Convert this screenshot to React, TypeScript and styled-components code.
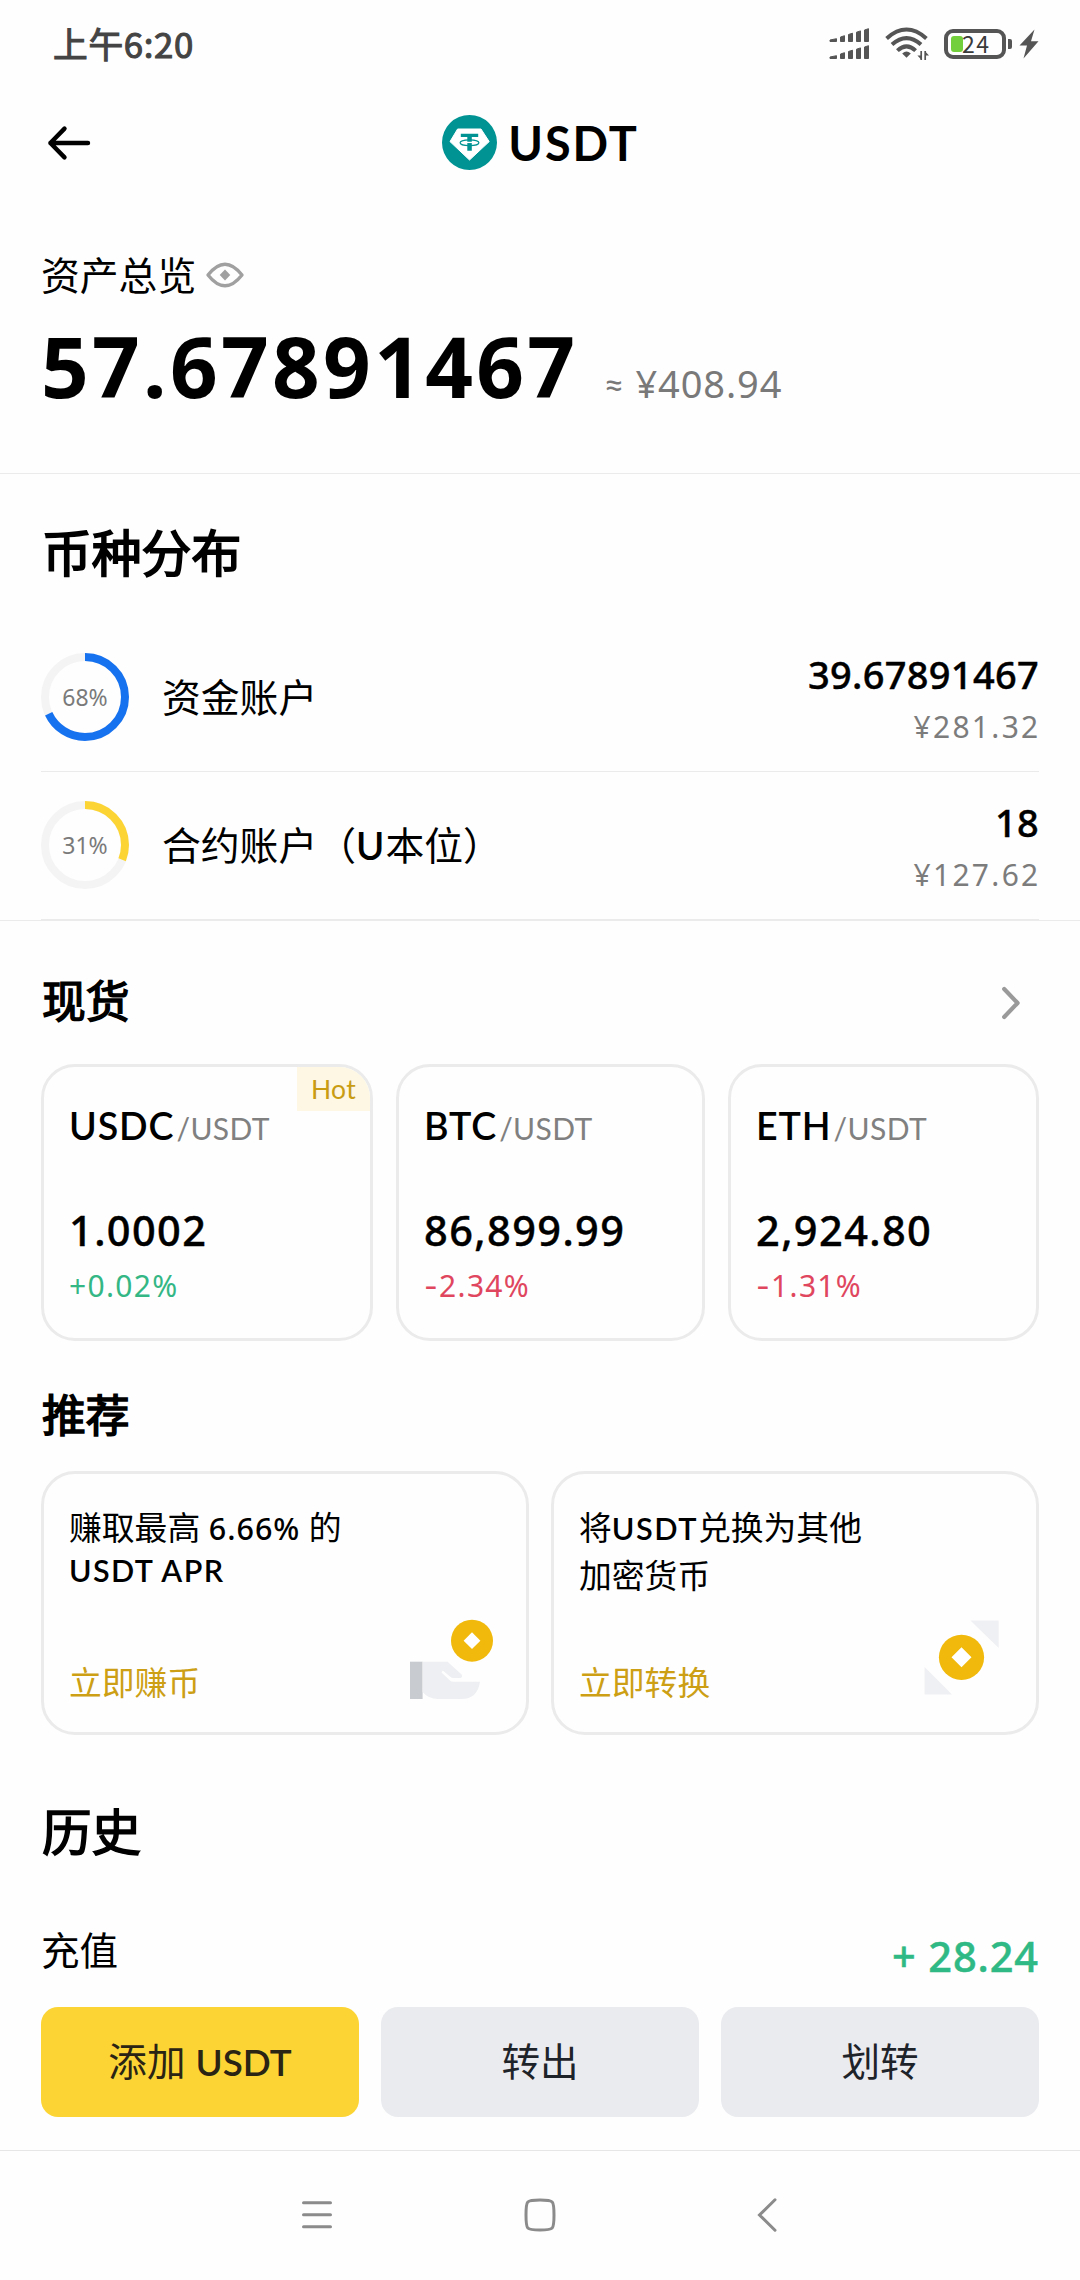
import React from "react";
import styled, { createGlobalStyle } from "styled-components";

const SANS = '"Noto Sans", "Noto Sans CJK SC", sans-serif';
const CJK = '"Noto Sans CJK SC", "Noto Sans", sans-serif';
const LETTERS = 'Lato, "Noto Sans", "Noto Sans CJK SC", sans-serif';
const LINE = "#ebebeb";

const GlobalStyle = createGlobalStyle`
  * { box-sizing: border-box; }
  body { margin: 0; background: #fefefe; color: #000; font-family: ${SANS}; }
`;

const Screen = styled.div`
  width: 1080px;
  height: 2280px;
  overflow: hidden;
  display: flex;
  flex-direction: column;
  background: #fefefe;
`;

const StatusBar = styled.div`
  height: 85px;
  flex: none;
  padding: 0 41px 0 53px;
  display: flex;
  align-items: center;
  justify-content: space-between;
`;

const Clock = styled.span`
  font: 400 34.7px/86px ${CJK};
  -webkit-text-stroke: 1.1px #444;
  letter-spacing: 0.7px;
  color: #444;
`;

const StatusIcons = styled.div`
  display: flex;
  align-items: center;
  height: 34px;
  padding-top: 3px;
`;

const SignalIcon = styled.svg`
  width: 41px;
  height: 32px;
  margin-right: 15px;
`;

const WifiIcon = styled.svg`
  width: 44px;
  height: 34px;
  margin-right: 15px;
`;

const Battery = styled.div`
  position: relative;
  width: 62px;
  height: 30px;
  border: 4px solid #555;
  border-radius: 9px;
  margin-right: 13px;
  padding-left: 14px;
  font: 400 23px/20px ${CJK};
  letter-spacing: 1.4px;
  color: #3a3a3a;

  &::before {
    content: "";
    position: absolute;
    z-index: -1;
    left: 3px;
    top: 3px;
    width: 12px;
    height: 16px;
    border-radius: 3px;
    background: #74cf3c;
  }
  &::after {
    content: "";
    position: absolute;
    right: -10px;
    top: 6px;
    width: 4px;
    height: 10px;
    border-radius: 0 2px 2px 0;
    background: #555;
  }
`;

const BatteryWrap = styled.div`
  position: relative;
  z-index: 0;
`;

const BoltIcon = styled.svg`
  width: 20px;
  height: 30px;
`;

const Header = styled.header`
  height: 115px;
  flex: none;
  padding: 0 41px 0 46px;
  display: grid;
  grid-template-columns: 1fr auto 1fr;
  align-items: center;
`;

const BackIcon = styled.svg`
  width: 46px;
  height: 36px;
`;

const CoinTitle = styled.h1`
  margin: 0 4px 0 0;
  display: flex;
  align-items: center;
  gap: 11px;
  font: 700 46.8px/60px ${LETTERS};
  letter-spacing: 1.9px;
`;

const Summary = styled.section`
  height: 274px;
  flex: none;
  padding: 48px 41px 0;
  border-bottom: 1px solid ${LINE};
`;

const SummaryLabel = styled.div`
  display: flex;
  align-items: center;
  gap: 8px;
  height: 54px;
  font-size: 38.8px;
  line-height: 53px;
`;

const Balance = styled.div`
  margin-top: 13px;
  display: flex;
  align-items: baseline;
  line-height: 101px;
`;

const BalanceValue = styled.span`
  font-size: 83.5px;
  font-weight: 700;
  letter-spacing: 3.3px;
`;

const BalanceFiat = styled.span`
  font-size: 38px;
  letter-spacing: 0.9px;
  color: #797979;
`;

const Approx = styled.span`
  width: 32px;
  margin-left: 25px;
  font-family: ${LETTERS};
  font-size: 36px;
  color: #797979;
`;

const Section = styled.section<{ $top: number; $ruled?: boolean }>`
  flex: none;
  padding: ${(p) => p.$top}px 41px 0;
  border-bottom: ${(p) => (p.$ruled ? `1px solid ${LINE}` : "none")};
`;

const Heading = styled.h2<{ $size: number; $after: number; $stroke: number }>`
  margin: 0 0 ${(p) => p.$after}px;
  padding-left: 1px;
  height: 56px;
  display: flex;
  align-items: center;
  justify-content: space-between;
  font-size: ${(p) => p.$size}px;
  font-weight: 400;
  line-height: 56px;
  -webkit-text-stroke: ${(p) => p.$stroke}px #000;
`;

const MoreIcon = styled.svg`
  width: 22px;
  height: 36px;
  margin: 2px 17px 0 0;
`;

const AccountRow = styled.div`
  height: 148px;
  padding-bottom: 1px;
  border-bottom: 1px solid ${LINE};
  display: flex;
  align-items: center;
`;

const Ring = styled.div`
  width: 88px;
  height: 88px;
  display: grid;
  place-items: center;
  margin-right: 33px;

  > * { grid-area: 1 / 1; }
`;

const RingLabel = styled.span`
  font-size: 23px;
  line-height: 30px;
  color: #7a7a7a;
`;

const AccountName = styled.span`
  flex: 1;
  font-size: 38.8px;
  line-height: 54px;
`;

const Latin = styled.span<{ $size: number; $spacing?: number }>`
  font-family: ${LETTERS};
  font-size: ${(p) => p.$size}px;
  font-weight: 600;
  line-height: 1;
  letter-spacing: ${(p) => p.$spacing ?? 0}px;
`;

const Rate = styled(Latin)`
  font-family: ${SANS};
  font-weight: 500;
`;

const Amounts = styled.div`
  padding-top: 6px;
  text-align: right;
  line-height: 52px;
`;

const Amount = styled.div`
  font-size: 38px;
  font-weight: 500;
  letter-spacing: 0.3px;
  -webkit-text-stroke: 0.4px #000;
`;

const Fiat = styled.div`
  font-size: 30px;
  line-height: 54px;
  letter-spacing: 2.3px;
  margin: 0 -1.6px -2px 0;
  color: #7c7c7c;
`;

const PairGrid = styled.div`
  display: grid;
  grid-template-columns: 332px 309px 311px;
  gap: 23px;
`;

const Card = styled.article`
  position: relative;
  overflow: hidden;
  border: 3px solid ${LINE};
  border-radius: 34px;
`;

const PairCard = styled(Card)`
  height: 277px;
  padding: 34px 24px 0 25px;
`;

const PairName = styled.div`
  height: 50px;
  line-height: 50px;
  font-family: ${LETTERS};
  font-size: 37.6px;
  font-weight: 600;
  letter-spacing: 0.9px;
`;

const Quote = styled.span`
  font-size: 30px;
  font-weight: 400;
  line-height: 1;
  letter-spacing: 0.4px;
  margin-left: 2px;
  color: #808080;
`;

const Price = styled.div`
  margin-top: 53px;
  font-size: 41.5px;
  font-weight: 500;
  line-height: 52px;
  letter-spacing: 1.4px;
  -webkit-text-stroke: 0.4px #000;
`;

const Change = styled.div<{ $up: boolean }>`
  margin-top: 7px;
  font-size: 30px;
  line-height: 45px;
  letter-spacing: 1.3px;
  color: ${(p) => (p.$up ? "#34b785" : "#e0475f")};
`;

const Sign = styled.span<{ $wide: boolean }>`
  font-family: ${(p) => (p.$wide ? "Inter, sans-serif" : SANS)};
  line-height: 1;
`;

const HotTag = styled.span`
  position: absolute;
  top: 0;
  right: 0;
  width: 73px;
  height: 44px;
  padding-left: 14px;
  background: #fdf7e3;
  color: #c99c12;
  font-family: ${LETTERS};
  font-size: 26.5px;
  letter-spacing: 0.3px;
  line-height: 44px;
`;

const PromoGrid = styled.div`
  display: grid;
  grid-template-columns: 1fr 1fr;
  gap: 22px;
`;

const PromoCard = styled(Card)`
  height: 264px;
  padding: 30px 30px 25px 25px;
  display: flex;
  flex-direction: column;
  justify-content: space-between;
`;

const PromoLine = styled.div<{ $height?: number }>`
  font-size: 32.8px;
  line-height: ${(p) => p.$height ?? 48}px;
`;

const PromoFoot = styled.div`
  display: flex;
  align-items: flex-end;
  justify-content: space-between;
  font-size: 32.8px;
  line-height: 48px;
  color: #cc9f14;
`;

const PromoIcon = styled.svg`
  width: 88px;
  height: 88px;
  margin-bottom: 2px;
`;

const HistoryRow = styled.div`
  height: 54px;
  display: flex;
  justify-content: space-between;
  font-size: 38.6px;
  line-height: 54px;
`;

const Credit = styled.span`
  padding-top: 6px;
  font-size: 41.5px;
  font-weight: 500;
  letter-spacing: 0.9px;
  -webkit-text-stroke: 0.5px #2fb984;
  color: #2fb984;
`;

const Actions = styled.div`
  flex: none;
  margin-top: 30px;
  padding: 0 41px 33px;
  display: grid;
  grid-template-columns: repeat(3, 1fr);
  gap: 22px;
  border-bottom: 1px solid #e6e6e6;
`;

const ActionButton = styled.button<{ $primary?: boolean }>`
  height: 110px;
  border: 0;
  border-radius: 17px;
  padding: 0 0 2px;
  background: ${(p) => (p.$primary ? "#fcd535" : "#eaebef")};
  color: ${(p) => (p.$primary ? "#2a2414" : "#1e2329")};
  font: 400 38.6px/54px ${SANS};
`;

const NavBar = styled.nav`
  flex: 1;
  display: flex;
  align-items: center;
  gap: 191px;
  padding: 0 0 1px 301px;
`;

const NavIcon = styled.svg<{ $shift?: number }>`
  width: 32px;
  height: 34px;
  margin-left: ${(p) => p.$shift ?? 0}px;
  fill: none;
  stroke: #8b8b8b;
  stroke-width: 3;
  stroke-linecap: round;
`;

const SIGNAL_BARS = [
  { x: 0.5, w: 7.5, top: 10.5 },
  { x: 11, w: 5, top: 7.5 },
  { x: 19, w: 5, top: 5 },
  { x: 27, w: 5, top: 2.7 },
  { x: 35, w: 5, top: 0.5 },
];

function Signal() {
  return (
    <SignalIcon viewBox="0 0 41 32" fill="#555" stroke="#555" strokeWidth="1" strokeLinejoin="round">
      {[0, 17].map((dy) =>
        SIGNAL_BARS.map((b) => (
          <path
            key={`${dy}-${b.x}`}
            d={`M${b.x + 0.5} ${dy + b.top + 1.5}L${b.x + b.w - 0.5} ${dy + b.top + 0.2}V${dy + 13.5}H${b.x + 0.5}Z`}
          />
        )),
      )}
    </SignalIcon>
  );
}

function Wifi() {
  return (
    <WifiIcon viewBox="0 0 44 34" fill="none" stroke="#555" strokeWidth="4">
      <path d="M1.6 11.4Q21.5 -6.4 41.4 11.4" />
      <path d="M7 17.6Q21.5 4.6 36 17.6" />
      <path d="M12.4 23.6Q21.5 15 30.6 23.6" />
      <path d="M17.2 26.4Q21.5 22.8 25.8 26.4L21.5 30.8Z" fill="#555" stroke="none" />
      <path d="M36.2 24V33M40.2 24V33" strokeWidth="1.7" />
      <path d="M36.5 32.8L32.4 28.5H36.5ZM40 24.2L44 28.4H40Z" fill="#555" stroke="none" />
    </WifiIcon>
  );
}

function TetherLogo() {
  return (
    <svg width="55" height="55" viewBox="0 0 55 55">
      <circle cx="27.5" cy="27.5" r="27.5" fill="#009393" />
      <path d="M15.6 14H39L47.2 26.6L27.5 45L8 26.6Z" fill="#fff" stroke="#fff" strokeLinejoin="round" />
      <path d="M18.8 18.7H36.2V22H29.8V35.7H25.3V22H18.8Z" fill="#009393" />
      <ellipse cx="27.5" cy="27.8" rx="9.4" ry="2.9" fill="none" stroke="#009393" strokeWidth="1.2" />
      <path d="M22 27.4H33" stroke="#fff" strokeWidth="1.3" />
    </svg>
  );
}

function PercentRing({ percent, color }: { percent: number; color: string }) {
  const r = 40;
  const length = 2 * Math.PI * r;
  return (
    <Ring>
      <svg width="88" height="88" viewBox="0 0 88 88" fill="none" strokeWidth="8">
        <circle cx="44" cy="44" r={r} stroke="#f4f4f4" />
        <circle
          cx="44"
          cy="44"
          r={r}
          stroke={color}
          strokeDasharray={`${(length * percent) / 100} ${length}`}
          transform="rotate(-90 44 44)"
        />
      </svg>
      <RingLabel>{percent}%</RingLabel>
    </Ring>
  );
}

const PAIRS = [
  { base: "USDC", price: "1.0002", sign: "+", change: "0.02%", hot: true },
  { base: "BTC", price: "86,899.99", sign: "-", change: "2.34%", hot: false },
  { base: "ETH", price: "2,924.80", sign: "-", change: "1.31%", hot: false },
];

export default function App() {
  return (
    <Screen>
      <GlobalStyle />
      <StatusBar>
        <Clock>上午6:20</Clock>
        <StatusIcons>
          <Signal />
          <Wifi />
          <BatteryWrap>
            <Battery>24</Battery>
          </BatteryWrap>
          <BoltIcon viewBox="0 0 20 30" fill="#555">
            <path d="M15.5 0.5L0.5 16.5H8L4.5 29.5L19.5 12.3H12Z" />
          </BoltIcon>
        </StatusIcons>
      </StatusBar>

      <Header>
        <BackIcon viewBox="0 0 46 36" fill="none" stroke="#000" strokeWidth="4.4" strokeLinecap="round" strokeLinejoin="round">
          <path d="M18.5 3.6L4.4 18L18.5 32.4M4.4 18H42" />
        </BackIcon>
        <CoinTitle>
          <TetherLogo />
          USDT
        </CoinTitle>
      </Header>

      <Summary>
        <SummaryLabel>
          资产总览
          <svg width="42" height="28" viewBox="0 0 42 28">
            <path
              d="M4 14Q12.500 3.200 21 3.200Q29.500 3.200 38 14Q29.500 24.800 21 24.800Q12.500 24.800 4 14Z"
              fill="none"
              stroke="#a0a0a0"
              strokeWidth="3.4"
              strokeLinejoin="round"
            />
            <path d="M21 8.600L26.300 14L21 19.400L15.700 14Z" fill="#a0a0a0" />
          </svg>
        </SummaryLabel>
        <Balance>
          <BalanceValue>57.67891467</BalanceValue>
          <Approx>≈</Approx>
          <BalanceFiat>¥408.94</BalanceFiat>
        </Balance>
      </Summary>

      <Section $top={51} $ruled>
        <Heading $size={49.8} $after={43} $stroke={1.8}>币种分布</Heading>
        <AccountRow>
          <PercentRing percent={68} color="#1772f0" />
          <AccountName>资金账户</AccountName>
          <Amounts>
            <Amount>39.67891467</Amount>
            <Fiat>¥281.32</Fiat>
          </Amounts>
        </AccountRow>
        <AccountRow>
          <PercentRing percent={31} color="#fcd535" />
          <AccountName>
            合约账户（<Latin $size={38.4} $spacing={1}>U</Latin>本位）
          </AccountName>
          <Amounts>
            <Amount>18</Amount>
            <Fiat>¥127.62</Fiat>
          </Amounts>
        </AccountRow>
      </Section>

      <Section $top={52}>
        <Heading $size={43.8} $after={35} $stroke={1.5}>
          现货
          <MoreIcon viewBox="0 0 22 36" fill="none" stroke="#9a9a9a" strokeWidth="4.2" strokeLinecap="round" strokeLinejoin="round">
            <path d="M4.200 5L17.600 19L4.200 33" />
          </MoreIcon>
        </Heading>
        <PairGrid>
          {PAIRS.map((p) => (
            <PairCard key={p.base}>
              {p.hot && <HotTag>Hot</HotTag>}
              <PairName>
                {p.base}
                <Quote>/USDT</Quote>
              </PairName>
              <Price>{p.price}</Price>
              <Change $up={p.sign === "+"}>
                <Sign $wide={p.sign === "-"}>{p.sign}</Sign>
                {p.change}
              </Change>
            </PairCard>
          ))}
        </PairGrid>
      </Section>

      <Section $top={46}>
        <Heading $size={43.8} $after={28} $stroke={1.6}>推荐</Heading>
        <PromoGrid>
          <PromoCard>
            <div>
              <PromoLine>
                赚取最高 <Rate $size={30.5} $spacing={1}>6.66%</Rate> 的
              </PromoLine>
              <PromoLine $height={35}>
                <Latin $size={30.5} $spacing={1.4}>USDT APR</Latin>
              </PromoLine>
            </div>
            <PromoFoot>
              立即赚币
              <PromoIcon viewBox="0 0 88 88">
                <rect x="2" y="44.700" width="12.600" height="37.300" fill="#c8cbd0" />
                <path
                  d="M14.600 44.700H39.600L53.600 57.500Q55 59.500 53 61H45.500Q43.500 61 42 59.500L34.800 53.600L33.500 55.500L42 63.500Q43.300 64.700 45.500 64.700H72Q69.500 82 53.500 82H30Q20.500 82 14.600 75Z"
                  fill="#eeeff2"
                />
                <circle cx="64" cy="23.700" r="21" fill="#f0b90b" />
                <path d="M64 15.300L72.400 23.700L64 32.100L55.600 23.700Z" fill="#fff" />
              </PromoIcon>
            </PromoFoot>
          </PromoCard>
          <PromoCard>
            <div>
              <PromoLine>
                将<Latin $size={30.7} $spacing={1.5}>USDT</Latin>兑换为其他
              </PromoLine>
              <PromoLine>加密货币</PromoLine>
            </div>
            <PromoFoot>
              立即转换
              <PromoIcon viewBox="0 0 88 88">
                <path d="M52.400 3.500H80.700V31ZM6.600 50V77.500H34Z" fill="#eff0f3" />
                <circle cx="43.500" cy="40.300" r="22.600" fill="#f0b90b" />
                <path d="M43.500 30.300L53.500 40.300L43.500 50.300L33.500 40.300Z" fill="#fff" />
              </PromoIcon>
            </PromoFoot>
          </PromoCard>
        </PromoGrid>
      </Section>

      <Section $top={69}>
        <Heading $size={49.6} $after={63} $stroke={1.6}>历史</Heading>
        <HistoryRow>
          充值
          <Credit>+ 28.24</Credit>
        </HistoryRow>
      </Section>

      <Actions>
        <ActionButton $primary>
          添加 <Latin $size={36.8}>USDT</Latin>
        </ActionButton>
        <ActionButton>转出</ActionButton>
        <ActionButton>划转</ActionButton>
      </Actions>

      <NavBar>
        <NavIcon viewBox="0 0 32 34">
          <path d="M2.500 4.700H29.500M2.500 16.700H29.500M2.500 28.700H29.500" />
        </NavIcon>
        <NavIcon viewBox="0 0 32 34">
          <path d="M16 2C24.500 2 26.700 2.400 28.200 4C29.700 5.600 30 8.500 30 17S29.700 28.400 28.200 30S24.500 32 16 32S5.300 31.600 3.800 30S2 25.500 2 17S2.300 5.600 3.800 4S7.500 2 16 2Z" />
        </NavIcon>
        <NavIcon viewBox="0 0 32 34" $shift={4}>
          <path d="M24 1.800L8.500 17L24 32.200" />
        </NavIcon>
      </NavBar>
    </Screen>
  );
}
